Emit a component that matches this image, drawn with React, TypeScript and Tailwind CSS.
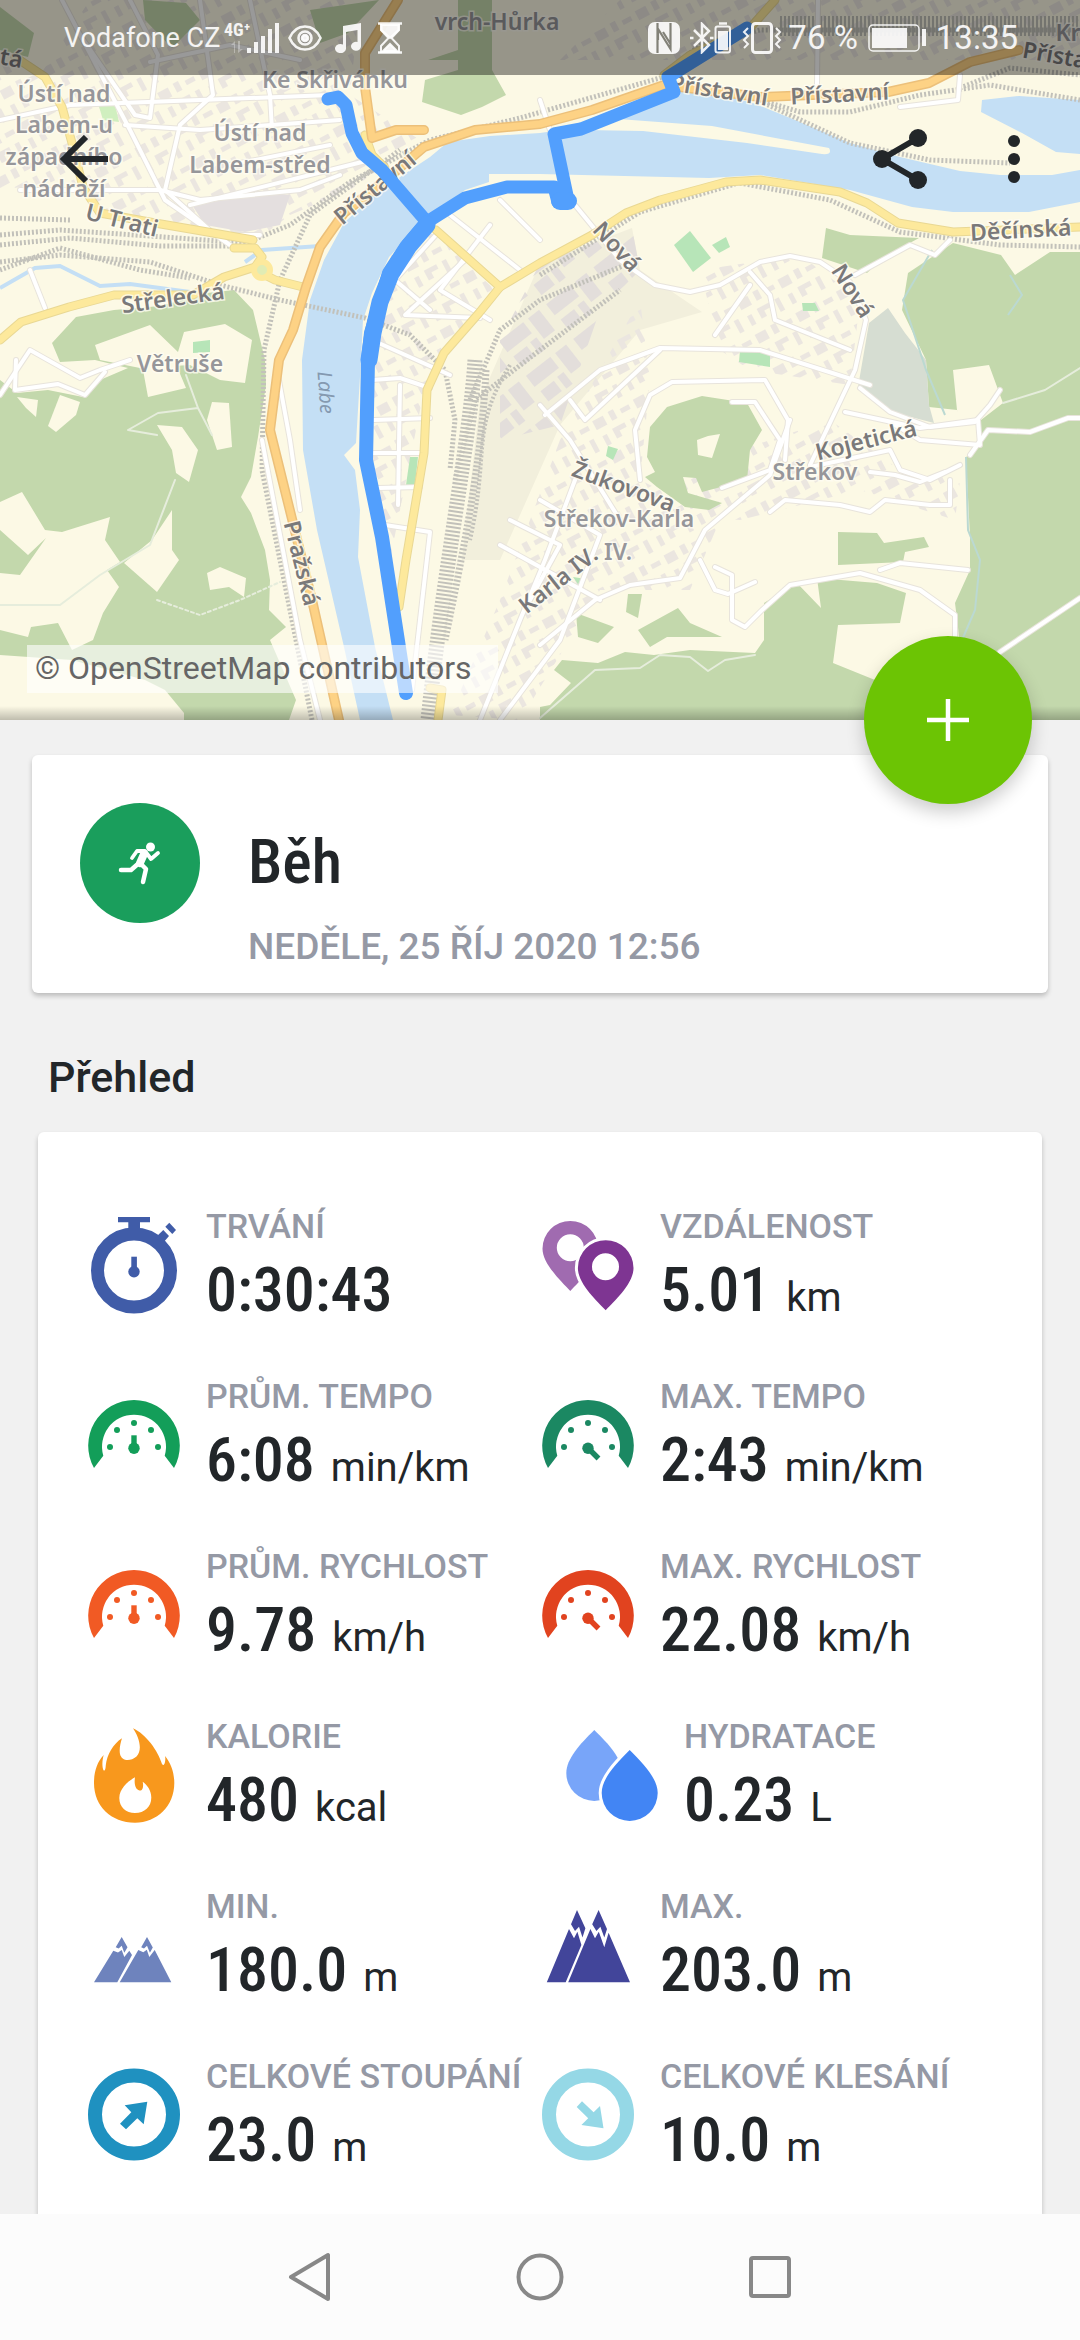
import React from "react";

type StatItem = {
  id: string;
  label: string;
  value: string;
  unit?: string;
  icon: React.ReactNode;
  className?: string;
};

const StatIcon = ({ children }: { children: React.ReactNode }) => (
  <svg viewBox="0 0 92 120" className="h-[120px] w-[92px] shrink-0" aria-hidden="true">
    {children}
  </svg>
);

const StopwatchIcon = () => (
  <StatIcon>
    <g fill="#405ca8">
      <circle cx="46" cy="64.5" r="36.5" fill="none" stroke="#405ca8" strokeWidth="13" />
      <path d="M30 11H62V16.3H52V24H40.3V16.3H30Z" />
      <path d="M75.3 24L81 30L75 37L67 32Z" />
      <path d="M81.3 16.7L88 24L84.3 28L77.3 20.7Z" />
      <path d="M43.3 50.7H48.9V62H43.3Z" />
      <circle cx="46" cy="65.7" r="5.7" />
    </g>
  </StatIcon>
);

const GaugeIcon = ({ color, max = false }: { color: string; max?: boolean }) => (
  <StatIcon>
    <g fill={color}>
      <path d="M6 92A45.8 45.8 0 1 1 86 92L76.7 79.7A32 32 0 1 0 15.3 79.7Z" />
      <circle cx="22" cy="71" r="3" />
      <circle cx="29" cy="54" r="3" />
      <circle cx="46" cy="47" r="3" />
      <circle cx="63" cy="54" r="3" />
      <circle cx="70" cy="71" r="3" />
      <circle cx="46" cy="72.3" r="5.7" />
      <path
        d={max ? "M46 72L56.5 82.5" : "M46 59.3V72"}
        stroke={color}
        strokeWidth="5.4"
      />
    </g>
  </StatIcon>
);

const PinsIcon = () => (
  <StatIcon>
    <path
      fill="#a06bb0"
      fillRule="evenodd"
      d="M28.3 85C20 76 .5 58 .5 42.7A27.8 27.8 0 0 1 56.1 42.7C56.1 58 36.6 76 28.3 85ZM28.3 28.2A13.5 13.5 0 1 0 28.3 55.2A13.5 13.5 0 1 0 28.3 28.2Z"
    />
    <path
      fill="#fff"
      stroke="#fff"
      strokeWidth="6"
      d="M63.7 104.3C55.4 95.3 35.9 78 35.9 62A27.8 27.8 0 0 1 91.5 62C91.5 78 72 95.3 63.7 104.3Z"
    />
    <path
      fill="#7e3592"
      fillRule="evenodd"
      d="M63.7 104.3C55.4 95.3 35.9 78 35.9 62A27.8 27.8 0 0 1 91.5 62C91.5 78 72 95.3 63.7 104.3ZM63.5 47.2A13.5 13.5 0 1 0 63.5 74.2A13.5 13.5 0 1 0 63.5 47.2Z"
    />
  </StatIcon>
);

const FlameIcon = () => (
  <StatIcon>
    <path
      fill="#f8981d"
      fillRule="evenodd"
      d="M45 12.3C58 18 70 35 74 48C75.5 50 76.5 48.5 77 46C77.4 44 77.5 42 77 40C83 47 86.3 57 86.3 67C86.3 90 69 106.7 47 106.7C23 106.7 6 90 6 67C6 56 9 46 15.7 39C14 45 14 51 15.5 54.3C17 55.5 17.6 53 17.8 49C19 39 25 28 34 22.3C32.5 27 31 33 32 38C33.5 45 42 46 48.5 40.5C55 34 51 21 45 12.3ZM47 61.3C40 65 31.3 73 31.3 82C31.3 91 38 97 47 97C56.5 97 63.3 91 63.3 81.5C63.3 74 59 69 54.7 65.7C55.7 70 55 75 51.5 74.6C47 73.5 46 67 47 61.3Z"
    />
  </StatIcon>
);

const DropsIcon = () => (
  <StatIcon>
    <path fill="#78a5f9" d="M28.3 14C14 28 .3 43 .3 57A28 28 0 0 0 56.3 57C56.3 43 42.6 28 28.3 14Z" />
    <path
      fill="#4285f4"
      stroke="#fff"
      strokeWidth="6"
      paintOrder="stroke"
      d="M63.7 34C49.4 48 35.7 63 35.7 77A28 28 0 0 0 91.7 77C91.7 63 78 48 63.7 34Z"
    />
  </StatIcon>
);

const LowPeaksIcon = () => (
  <StatIcon>
    <g fill="#6e83bd">
      <path d="M33.7 51L39.5 61.3L36.3 66.7L33.7 59.7L30.7 62.6L27.7 61.3Z" />
      <path d="M25.3 64.7L30 66.5L33.7 64L36.3 71L41.3 64.7L44 69L29.3 96.3H6Z" />
      <path d="M59 51L64.8 61.5L61.9 66.7L59 59.7L56 62.6L53.2 61.3Z" />
      <path d="M50.3 64L55.3 66.2L58.8 63.8L61.3 71L66.7 64L83.3 96.3H31.7Z" />
    </g>
  </StatIcon>
);

const HighPeaksIcon = () => (
  <StatIcon>
    <g fill="#42459a">
      <path d="M35 24L43.4 42.3L40.5 51.5L37 40.7L33 45L29 38.3Z" />
      <path d="M27 43L32 52.3L35.4 45.7L39.4 59L23.7 96.3H4.8Z" />
      <path d="M56.6 24L65 43L62.3 51.5L58.4 40.7L54.4 45L50.2 38.3Z" />
      <path d="M48.4 43L53 52.3L56.8 45.7L62.3 61.3L66.6 46.7L88 96.3H26.2Z" />
    </g>
  </StatIcon>
);

const AscentIcon = () => (
  <StatIcon>
    <circle cx="46" cy="58.5" r="39" fill="none" stroke="#1f91c0" strokeWidth="14" />
    <path fill="#1f91c0" d="M59.3 45.7L55.7 68.3L49.3 62.3L38 73.3L32 67.7L43.3 56.3L36.7 49.3Z" />
  </StatIcon>
);

const DescentIcon = () => (
  <StatIcon>
    <circle cx="46" cy="58.5" r="39" fill="none" stroke="#95d8e6" strokeWidth="14" />
    <path fill="#95d8e6" d="M61.5 72.3L58 50L51.6 56.3L40 45.3L34.7 51L46.2 62.3L39.4 69Z" />
  </StatIcon>
);

const stats: StatItem[] = [
  { id: "duration", label: "TRVÁNÍ", value: "0:30:43", icon: <StopwatchIcon /> },
  { id: "distance", label: "VZDÁLENOST", value: "5.01", unit: "km", icon: <PinsIcon /> },
  { id: "avg-pace", label: "PRŮM. TEMPO", value: "6:08", unit: "min/km", icon: <GaugeIcon color="#139e59" /> },
  { id: "max-pace", label: "MAX. TEMPO", value: "2:43", unit: "min/km", icon: <GaugeIcon color="#1b8862" max /> },
  { id: "avg-speed", label: "PRŮM. RYCHLOST", value: "9.78", unit: "km/h", icon: <GaugeIcon color="#f15a24" /> },
  { id: "max-speed", label: "MAX. RYCHLOST", value: "22.08", unit: "km/h", icon: <GaugeIcon color="#e1431f" max /> },
  { id: "calories", label: "KALORIE", value: "480", unit: "kcal", icon: <FlameIcon /> },
  { id: "hydration", label: "HYDRATACE", value: "0.23", unit: "L", icon: <DropsIcon />, className: "pl-6" },
  { id: "min-altitude", label: "MIN.", value: "180.0", unit: "m", icon: <LowPeaksIcon /> },
  { id: "max-altitude", label: "MAX.", value: "203.0", unit: "m", icon: <HighPeaksIcon /> },
  { id: "ascent", label: "CELKOVÉ STOUPÁNÍ", value: "23.0", unit: "m", icon: <AscentIcon /> },
  { id: "descent", label: "CELKOVÉ KLESÁNÍ", value: "10.0", unit: "m", icon: <DescentIcon /> },
];

const forests = [
  "M0 380L17 393L48 390L83 397L100 380L128 368L95 360L60 362L52 343L76 317L114 310L160 306L207 293L234 290L253 310L265 360L266 385L258 437L251 477L241 497L251 513L265 550L270 580L269 610L286 627L270 640L296 700L289 720H0Z",
  "M650 427L667 407L702 396L747 403L762 430L750 450L747 480L702 492L696 478L683 477L688 493L722 503L709 510L685 507L657 487L645 477L655 472L647 457Z",
  "M908 273L953 243L1001 255L1015 275L1050 252H1080V720H540V707L550 705L571 683L554 670L562 660L598 663L625 652L654 655L690 650L755 653L764 640V603L785 590L796 582L821 608L817 578L877 583L906 593L900 623L838 625L833 663L875 680L960 650L958 627L955 603L970 570L970 537L966 457L975 440L957 410L929 407L926 360L902 310Z",
  "M838 532L877 533L884 543L924 537L929 547L905 552L903 562L838 565Z",
  "M826 228L850 235L919 238L884 257L867 273L822 258Z",
  "M576 613L614 627L598 643L578 637Z",
  "M678 608L690 623L722 637L667 637L650 647L638 630Z",
  "M628 594L642 594L638 618L626 612Z",
  "M458 0H492V70L506 95L482 107L461 115L422 102L425 80L458 70V60H428L458 50Z",
  "M0 7L34 33L28 57L0 50Z",
  "M143 0L186 3L200 20L172 48L145 20Z",
  "M310 10L379 0L348 33L320 43Z",
];

const clearings = [
  "M0 502L22 492L45 530L62 532L110 517L105 540L120 562L107 570L119 587L103 613L93 640L72 650L58 623L31 627L28 637L0 630Z",
  "M172 510L172 550L179 560L157 592L124 563L152 540Z",
  "M157 425L182 427L198 450L189 482L176 473L172 450Z",
  "M212 402L229 403L232 447L217 450L207 420Z",
  "M138 345L170 350L186 388L148 397L143 370Z",
  "M207 573L220 567L246 578L244 597L229 587L210 590Z",
  "M0 655L72 660L145 680L165 690L184 713V720H0Z",
  "M95 345L150 325L178 352L184 332L225 324L252 340L245 383L220 380L190 365L140 368L100 360Z",
  "M17 397L38 400L36 417L26 408Z",
  "M60 395L80 402L76 415L56 432L48 426Z",
  "M697 440L708 436L720 434L712 458L698 455Z",
  "M953 370L989 365L1003 403L981 420L980 445L966 457L957 410Z",
];

const urban = [
  "M0 60L40 75L90 0H360L350 95L420 140L350 190L290 215L250 245L100 210L70 180L0 190Z",
  "M398 225L436 235L495 290L455 345L425 385L390 560L370 460L372 340Z",
  "M700 270L800 255L860 300L850 385L750 370L720 350Z",
  "M500 600L560 440L640 300L650 380L640 480L720 520L690 590L600 590L520 720L450 715Z",
  "M560 60H1080V0H620Z",
  "M640 510L740 450L830 420L900 470L960 480L955 520L860 490L740 520Z",
];

const whiteRoads = [
  "M62 0L130 130L165 200L230 245",
  "M0 120L70 105L200 100L330 95",
  "M20 190L160 190L200 200L300 190L340 175",
  "M125 125L200 130L340 120",
  "M80 35L135 115L150 118L158 55L130 0",
  "M200 0L213 95L180 125L165 190L215 235L260 235",
  "M250 0L270 95L272 130",
  "M190 205L330 170L370 160",
  "M230 165L330 145",
  "M150 62L230 45L300 60",
  "M30 270L45 308",
  "M0 395L30 350L80 378L100 370L130 360",
  "M16 360L15 390L58 384L85 395L105 372",
  "M372 340L450 375",
  "M372 380L400 378L430 388",
  "M374 420L430 418",
  "M372 453L425 453",
  "M378 488L420 487",
  "M400 385L398 505",
  "M385 525L430 532L412 690",
  "M436 235L395 280L430 310",
  "M465 260L405 315L480 318",
  "M490 225L440 290L490 320",
  "M450 215L520 270M500 200L540 240",
  "M575 205L620 260L655 285L690 292L720 285L760 262L790 256L820 262L850 282L866 320L855 370L810 465",
  "M540 405L570 440L620 520M545 415L600 370L660 348L760 350L870 385",
  "M750 272L770 295L775 320L850 350M750 285L715 335",
  "M570 400L585 420L660 350",
  "M855 275L910 245L935 255L950 240",
  "M640 480L635 430L650 395L672 382L765 380L788 420L785 460",
  "M732 402L755 402L770 425L780 440L770 470L722 488",
  "M860 388L890 412L930 427L975 422L990 405L1000 390",
  "M845 412L920 428L978 420L980 445L920 440L895 425",
  "M810 467L890 450L900 470L930 480L960 465",
  "M870 472L895 475L920 482L945 472M950 480L950 505L930 505L885 500L870 512L840 505L785 500L770 512",
  "M540 645L595 600L630 585L680 578L705 530L770 475L790 420",
  "M700 560L715 590L728 594L755 582M715 567L732 575L732 620L745 627L762 610L790 585L860 573L920 590L955 615L955 640",
  "M880 570L900 563L968 570",
  "M970 455L988 430L1030 432L1068 418H1080",
  "M1000 652L1080 598",
  "M540 500L600 535L560 640L500 720M545 560L520 620L480 720M575 480L545 560",
  "M500 545L600 600M510 520L560 545L530 600",
  "M540 100L560 160L572 205",
  "M818 0L817 85M960 75L958 100L900 107",
  "M278 375L290 440L300 510",
  "M262 440L300 640L320 720",
];

const yellowRoads = [
  "M15 57L45 77L62 107L72 143L83 187L100 213L155 223L196 230L253 240",
  "M0 340L21 322L69 307L114 295L193 295L224 277L255 267L262 257L255 248L234 248",
  "M255 270L275 280L303 287",
  "M365 135L372 155L385 168",
  "M436 230L500 287L540 263L592 235L626 213L660 200L726 182L760 180L840 192L867 203L898 223L953 232L1080 227",
  "M500 287L479 313L444 353L427 390L424 453L406 560L399 607",
  "M430 688L442 690L438 720",
  "M664 75L690 55L750 28L775 0",
];

const orangeRoads = [
  "M398 0L365 53L365 87L372 138L396 130L424 130",
  "M1019 50L970 62L929 83L888 92L760 97L664 85L592 110L540 124L475 130L424 147L389 177L344 213L320 247L306 287L293 330L279 360L270 430L293 523L312 600L339 720",
];

const rails = [
  "M0 218L70 220M0 235L60 230L150 236L245 243L290 225L350 182L430 140L520 118L660 78L700 45L760 30L1080 30",
  "M0 245L70 238L160 246L230 246",
  "M0 262L60 255L150 262L220 285L280 300L365 318L410 335L445 370L455 420L450 470",
  "M0 270L60 248L140 270L190 278",
  "M312 720L280 560L262 470L264 350L280 280L310 215L400 150",
  "M764 103L850 143L930 160L1010 163",
  "M760 100L800 112L850 112L920 95L990 85L1080 100M960 88L1010 68L1080 75",
  "M470 400L500 330L540 300L625 265M455 480L475 400L540 350L620 290",
  "M740 183L830 200L900 232L1000 245L1080 247",
  "M540 275L640 212L735 184",
];

type MapLabel = { text: string; x: number; y: number; rotate?: number; road?: boolean };

const mapLabels: MapLabel[] = [
  { text: "Ústí nad", x: 64, y: 102 },
  { text: "Labem-u", x: 64, y: 133 },
  { text: "západního", x: 64, y: 165 },
  { text: "nádraží", x: 64, y: 197 },
  { text: "Ke Skřivánku", x: 335, y: 88 },
  { text: "Ústí nad", x: 260, y: 141 },
  { text: "Labem-střed", x: 260, y: 173 },
  { text: "vrch-Hůrka", x: 497, y: 30 },
  { text: "Větruše", x: 180, y: 372 },
  { text: "Střekov", x: 815, y: 480 },
  { text: "Střekov-Karla", x: 619, y: 527 },
  { text: "IV.", x: 618, y: 560 },
  { text: "U Trati", x: 120, y: 228, rotate: 14, road: true },
  { text: "Střelecká", x: 174, y: 306, rotate: -8, road: true },
  { text: "Přístavní", x: 380, y: 194, rotate: -40, road: true },
  { text: "Přístavní", x: 718, y: 98, rotate: 9, road: true },
  { text: "Přístavní", x: 840, y: 102, rotate: -3, road: true },
  { text: "Přístavní", x: 1070, y: 66, rotate: 10, road: true },
  { text: "Nová", x: 611, y: 252, rotate: 48, road: true },
  { text: "Nová", x: 846, y: 295, rotate: 58, road: true },
  { text: "Děčínská", x: 1021, y: 238, rotate: -3, road: true },
  { text: "Pražská", x: 294, y: 565, rotate: 76, road: true },
  { text: "Kojetická", x: 868, y: 448, rotate: -14, road: true },
  { text: "Žukovova", x: 621, y: 494, rotate: 20, road: true },
  { text: "Karla IV.", x: 563, y: 586, rotate: -38, road: true },
  { text: "tá", x: 10, y: 66, rotate: 10, road: true },
  { text: "Kr", x: 1068, y: 41 },
];

const RouteMap = () => (
  <svg
    viewBox="0 0 1080 720"
    preserveAspectRatio="xMidYMid slice"
    className="block h-full w-full"
    role="img"
    aria-label="Mapa trasy"
  >
    <defs>
      <pattern id="houses" width="46" height="38" patternUnits="userSpaceOnUse" patternTransform="rotate(-28)">
        <path d="M3 4H15V14H3ZM21 3H27V13H21ZM33 6H43V11H33ZM5 22H10V33H5ZM17 20H31V25H23V31H17ZM37 20H42V34H37Z" fill="#ebe6e0" />
      </pattern>
      <pattern id="halls" width="60" height="44" patternUnits="userSpaceOnUse" patternTransform="rotate(-38)">
        <path d="M3 4H34V18H3ZM40 4H54V30H40ZM5 25H22V38H5ZM27 24H35V39H27Z" fill="#e3dedb" />
      </pattern>
      <linearGradient id="map-edge" x1="0" y1="0" x2="0" y2="1">
        <stop offset="0" stopColor="#000" stopOpacity="0" />
        <stop offset="1" stopColor="#000" stopOpacity="0.24" />
      </linearGradient>
    </defs>
    <rect width="1080" height="720" fill="#fcf9e5" />

    {/* Land use */}
    <path d="M540 263L632 228L640 270L702 312L640 330L560 425L500 560L462 560L480 400Z" fill="#f2efdc" />
    <path d="M540 263L632 228L640 270L600 310L560 425L500 440L500 340Z" fill="url(#halls)" />
    {urban.map((d) => (
      <path key={d} d={d} fill="url(#houses)" />
    ))}
    <path d="M192 205L250 190L290 195L280 225L245 232L205 225Z" fill="#e4dfdf" />
    {forests.map((d) => (
      <path key={d} d={d} fill="#c3d8ac" />
    ))}
    {clearings.map((d) => (
      <path key={d} d={d} fill="#fcf9e5" />
    ))}
    <path d="M0 530L28 555L46 538L20 575L0 573Z" fill="#c3d8ac" />
    <path d="M869 323L888 308L905 333L926 360L929 405L934 423L884 410L858 387Z" fill="#d6ddd2" />
    <g fill="#b7e5b8">
      <path d="M674 245L690 231L711 258L693 272Z" />
      <path d="M712 245L726 237L730 247L719 253Z" />
      <path d="M410 457H418L415 485H406Z" />
      <path d="M98 103L114 100L119 122L103 120Z" fill="#d0efbf" />
      <path d="M802 303H815L819 311H803Z" />
      <path d="M740 350L770 352V367L739 362Z" />
      <path d="M608 446L618 449L613 460L606 456Z" />
      <path d="M193 342L210 340V352L193 353Z" />
      <path d="M573 577L586 579L580 587Z" />
    </g>

    {/* Water */}
    <g fill="#c4dff5">
      <path d="M1080 170L1052 175H1000L960 171L900 157L850 143L800 122L756 104L720 94L680 90L640 108L600 124L540 133L490 136L448 142L430 157L406 173L370 198L344 223L324 260L310 300L302 360L303 450L317 530L344 647L360 720H393L375 647L358 557L360 510L355 470L344 455L356 443L361 360L363 320L372 293L389 257L424 220L465 190L489 182V174H540L709 178L760 175L850 190L912 207L953 212H1029L1080 202Z" />
      <path d="M982 100L1019 96L1080 100V154L1056 152L1022 133L981 112Z" />
    </g>
    <path d="M605 118L712 126L829 148Q833 155 822 154L747 143L643 131L585 130Z" fill="#fcf9e5" />
    <g fill="none" stroke="#c4dff5" strokeWidth="4">
      <path d="M0 288L35 268L60 266L100 286L130 284L190 292" />
      <path d="M245 262L262 250L320 246" />
    </g>
    <path d="M1010 275L1022 295L1008 315M966 457L968 530L980 560L975 610L962 640M932 250L903 300L926 370L945 415" fill="none" stroke="#bbd9d2" strokeWidth="2" />

    {/* Railways */}
    <g fill="none" stroke="#c2c1ba" strokeWidth="5" strokeDasharray="2 2">
      {rails.map((d) => (
        <path key={d} d={d} />
      ))}
      <path d="M475 360C470 440 445 560 428 720" strokeWidth="15" />
      <path d="M486 370C482 450 470 520 445 640" strokeWidth="7" />
      <path d="M510 365C470 430 490 450 470 540" strokeWidth="4" />
      <path d="M780 26H1080" strokeWidth="20" />
    </g>

    {/* Roads */}
    <g fill="none" strokeLinecap="round" strokeLinejoin="round">
      <g stroke="#e8e4dc" strokeWidth="6">
        {whiteRoads.map((d) => (
          <path key={d} d={d} />
        ))}
      </g>
      <g stroke="#ffffff" strokeWidth="4">
        {whiteRoads.map((d) => (
          <path key={d} d={d} />
        ))}
      </g>
      <g stroke="#e9d894" strokeWidth="9">
        {yellowRoads.map((d) => (
          <path key={d} d={d} />
        ))}
      </g>
      <g stroke="#fde99c" strokeWidth="7">
        {yellowRoads.map((d) => (
          <path key={d} d={d} />
        ))}
      </g>
      <g stroke="#ecc07a" strokeWidth="10">
        {orangeRoads.map((d) => (
          <path key={d} d={d} />
        ))}
      </g>
      <g stroke="#fdd285" strokeWidth="7">
        {orangeRoads.map((d) => (
          <path key={d} d={d} />
        ))}
      </g>
      <circle cx="262" cy="270" r="8" fill="#e1ecb4" stroke="#fde99c" strokeWidth="6" />
      <g stroke="#e6eddc" strokeWidth="2">
        <path d="M186 375L198 408L158 413L128 430L157 435M198 408L212 435M175 480L150 545L100 575L60 605H0" />
        <path d="M540 718L595 670L640 668L660 655L690 657L708 671L725 660L755 655" />
        <path d="M1003 403L1045 390L1080 368" />
        <path d="M157 600L200 615L240 600L280 582" strokeDasharray="3 3" />
      </g>
    </g>

    {/* Labels */}
    <g
      fontFamily="'Noto Sans', 'Open Sans', sans-serif"
      fontWeight="600"
      fontSize="23"
      textAnchor="middle"
      stroke="#fffdf4"
      strokeOpacity="0.75"
      strokeWidth="3"
      paintOrder="stroke"
    >
      {mapLabels.map((label, index) => (
        <text
          key={index}
          x={label.x}
          y={label.y}
          fill={label.road ? "#7a797a" : "#96969a"}
          transform={`rotate(${label.rotate ?? 0} ${label.x} ${label.y})`}
        >
          {label.text}
        </text>
      ))}
    </g>
    <text
      x="319"
      y="393"
      fontSize="20"
      fontStyle="italic"
      fontFamily="'Noto Sans', 'Open Sans', sans-serif"
      fill="#8499b0"
      textAnchor="middle"
      transform="rotate(86 319 393)"
    >
      Labe
    </text>

    {/* Recorded route */}
    <g fill="none" stroke="#529ffd" strokeWidth="13" strokeLinecap="round" strokeLinejoin="round">
      <path d="M328 99L338 97L346 105L352 133L362 153L382 170L427 222L465 198L507 187L554 187L558 202L568 200L554 134L581 129L674 92L668 77L747 28" />
      <path d="M427 222L406 247L389 273L379 307L371 333L368 360L366 460L382 537L406 693" strokeWidth="14" />
      <path d="M427 225L409 246L391 274L380 302L373 333L369 360" strokeWidth="17" />
      <path d="M560 201L568 201" strokeWidth="18" />
    </g>
    <rect y="706" width="1080" height="14" fill="url(#map-edge)" />
  </svg>
);

const StatusBar = () => (
  <div className="absolute inset-x-0 top-0 flex h-[75px] items-center justify-between bg-black/40 pr-[62px] pl-16 text-white/90">
    <div className="flex items-center">
      <span className="text-[27px] leading-8">Vodafone CZ</span>
      <svg viewBox="0 0 56 36" className="ml-1 h-9 w-14" fill="currentColor" role="img" aria-label="Signál 4G+">
        <text x="0" y="16" fontSize="18" fontWeight="700" fontFamily="'Roboto Condensed', Roboto, sans-serif">4G⁺</text>
        <path d="M23 28h4v5h-4zM30 22h4v11h-4zM37 16h4v17h-4zM44 9h4v24h-4zM51 3h4v30h-4z" />
        <path d="M10 33V25H7L11 21V33ZM14 21H16V29H19L14 33Z" opacity="0.35" />
      </svg>
      <svg viewBox="0 0 34 28" className="ml-2 h-7 w-[34px]" fill="none" stroke="currentColor" strokeWidth="2.6" aria-hidden="true">
        <path d="M1.5 14C5 6 10.500 2.500 17 2.500S29 6 32.500 14C29 22 23.500 25.500 17 25.500S5 22 1.500 14Z" />
        <circle cx="17" cy="14" r="6.500" />
        <circle cx="17" cy="14" r="3" fill="currentColor" />
      </svg>
      <svg viewBox="0 0 28 32" className="ml-3 h-8 w-7" fill="currentColor" aria-hidden="true">
        <path d="M9 4L27 1V24A5 4.500 0 1 1 23.500 20V8L12 10V27A5.500 4.500 0 1 1 9 22.500Z" />
      </svg>
      <svg viewBox="0 0 24 32" className="ml-4 h-8 w-6" fill="none" stroke="currentColor" strokeWidth="2" aria-hidden="true">
        <path d="M0 1.500H24M0 30.500H24" strokeWidth="2.500" />
        <path d="M3 2V8L10.500 16L3 24V30H21V24L13.500 16L21 8V2" />
        <path d="M3.500 3H20.500V8L12 16L3.500 8ZM5 29L12 22L19 29Z" fill="currentColor" />
      </svg>
    </div>
    <div className="flex items-center">
      <svg viewBox="0 0 32 32" className="size-8" aria-hidden="true">
        <rect width="32" height="32" rx="7" fill="currentColor" />
        <path d="M9.500 1V31M9.500 6L22.500 27V14M10 18V9M22.500 1V22L15 10" fill="none" stroke="#828178" strokeWidth="2.200" />
      </svg>
      <svg viewBox="0 0 42 32" className="ml-[10px] h-8 w-[42px]" fill="none" stroke="currentColor" strokeWidth="2.500" aria-hidden="true">
        <path d="M4 8L19 23L12 30V2L19 9L4 24" />
        <path d="M0 16H3.500M20 16H23.500" />
        <rect x="25.500" y="4.500" width="14.500" height="26" rx="2" strokeWidth="2" />
        <path d="M29 1.500H37" />
        <path d="M28 9H38V28H28Z" fill="currentColor" stroke="none" />
      </svg>
      <svg viewBox="0 0 40 32" className="ml-[10px] h-8 w-10" fill="none" stroke="currentColor" strokeWidth="3" aria-hidden="true">
        <rect x="10.500" y="1.500" width="19" height="29" rx="3" />
        <path d="M6 6L2 10L6 14L2 18L6 22L2 26M34 6L38 10L34 14L38 18L34 22L38 26" strokeWidth="2" />
      </svg>
      <span className="ml-[6px] text-[33px] leading-9">76 %</span>
      <svg viewBox="0 0 58 28" className="ml-[10px] h-7 w-[58px]" fill="none" stroke="currentColor" strokeWidth="1.500" aria-hidden="true">
        <rect x="1" y="1" width="50" height="26" rx="4" />
        <path d="M4 4H39V24H4ZM54 5H58V22H54Z" fill="currentColor" stroke="none" />
      </svg>
      <span className="ml-[10px] text-[33px] leading-9">13:35</span>
    </div>
  </div>
);

const Toolbar = () => (
  <div className="absolute inset-x-0 top-[75px] flex h-[168px] items-center text-[#222629]">
    <button type="button" aria-label="Zpět" className="ml-[60px]">
      <svg viewBox="0 0 48 48" className="size-12" fill="none" stroke="currentColor" strokeWidth="6">
        <path d="M48 24H6M26 2L4 24L26 46" />
      </svg>
    </button>
    <button type="button" aria-label="Sdílet" className="ml-auto">
      <svg viewBox="0 0 56 64" className="h-16 w-14" fill="currentColor">
        <path d="M46 11L10 32L46 53" fill="none" stroke="currentColor" strokeWidth="6" />
        <circle cx="10" cy="32" r="9" />
        <circle cx="46" cy="11" r="9" />
        <circle cx="46" cy="53" r="9" />
      </svg>
    </button>
    <button type="button" aria-label="Další možnosti" className="mr-[54px] ml-[74px]">
      <svg viewBox="0 0 24 56" className="h-14 w-6" fill="currentColor">
        <circle cx="12" cy="10" r="6" />
        <circle cx="12" cy="28" r="6" />
        <circle cx="12" cy="46" r="6" />
      </svg>
    </button>
  </div>
);

const StatCell = ({ item }: { item: StatItem }) => (
  <div className={`flex items-center gap-[26px] ${item.className ?? ""}`}>
    {item.icon}
    <div>
      <dt className="text-[34px] leading-10 font-medium whitespace-nowrap text-[#9599a5]">{item.label}</dt>
      <dd className="mt-2 flex items-baseline gap-4 whitespace-nowrap">
        <span className="font-['Roboto_Condensed','Liberation_Sans_Narrow',Roboto,sans-serif] text-[62px] leading-[72px] font-medium">
          {item.value}
        </span>
        {item.unit && <span className="text-[40px] leading-10">{item.unit}</span>}
      </dd>
    </div>
  </div>
);

const NavigationBar = () => (
  <nav className="flex h-[126px] items-center justify-center bg-[#fcfcfc] text-[#888888]">
    <button type="button" aria-label="Zpět" className="flex w-[230px] justify-center">
      <svg viewBox="0 0 48 52" className="h-[52px] w-12" fill="none" stroke="currentColor" strokeWidth="4" strokeLinejoin="round">
        <path d="M42 4V48L5 26Z" />
      </svg>
    </button>
    <button type="button" aria-label="Domů" className="flex w-[230px] justify-center">
      <svg viewBox="0 0 48 48" className="size-12" fill="none" stroke="currentColor" strokeWidth="4">
        <circle cx="24" cy="24" r="21.500" />
      </svg>
    </button>
    <button type="button" aria-label="Nedávné" className="flex w-[230px] justify-center">
      <svg viewBox="0 0 48 48" className="size-12" fill="none" stroke="currentColor" strokeWidth="4">
        <rect x="5" y="5" width="38" height="38" rx="2" />
      </svg>
    </button>
  </nav>
);

const App = () => {
  return (
    <div className="flex min-h-screen flex-col bg-[#f1f1f1] font-[Roboto,'Noto_Sans',sans-serif] text-[#222629]">
      {/* Map header */}
      <header className="relative h-[720px]">
        <RouteMap />
        <StatusBar />
        <Toolbar />
        <a
          href="#openstreetmap"
          className="absolute bottom-[27px] left-[27px] bg-white/60 pt-[3px] pr-[26px] pb-[5px] pl-2 text-[32px] leading-10 text-[#666666]"
        >
          © OpenStreetMap contributors
        </a>
        <button
          type="button"
          aria-label="Přidat"
          className="absolute right-12 -bottom-[84px] z-10 flex size-[168px] items-center justify-center rounded-full bg-[#6cc404] shadow-[0_8px_18px_rgba(0,0,0,0.2)]"
        >
          <svg viewBox="0 0 42 42" className="size-[42px]" stroke="#ffffff" strokeWidth="4.500">
            <path d="M21 0V42M0 21H42" />
          </svg>
        </button>
      </header>

      <main className="flex flex-1 flex-col">
        {/* Activity */}
        <section className="mx-8 mt-[35px] flex items-start gap-12 rounded-md bg-white px-12 pt-12 pb-6 shadow-[0_3px_5px_rgba(0,0,0,0.22)]">
          <div className="flex size-[120px] shrink-0 items-center justify-center rounded-full bg-[#1a9e5c]">
            <svg viewBox="0 0 46 43" className="h-[43px] w-[46px]" fill="none" stroke="#ffffff" strokeWidth="4.500" strokeLinecap="round" strokeLinejoin="round" aria-hidden="true">
              <circle cx="33.500" cy="5" r="4.500" fill="#ffffff" stroke="none" />
              <path d="M27 12L23 21" strokeWidth="8" />
              <path d="M15 16L20 9H28L34 17L41 11" strokeWidth="3.800" />
              <path d="M22 21L14 28H4M23 21L29 27L26 40" />
            </svg>
          </div>
          <div className="pt-[23px]">
            <h1 className="font-['Roboto_Condensed','Liberation_Sans_Narrow',Roboto,sans-serif] text-[62px] leading-[72px] font-medium">
              Běh
            </h1>
            <p className="mt-[27px] text-[37px] leading-11 font-medium text-[#9599a5]">NEDĚLE, 25 ŘÍJ 2020 12:56</p>
          </div>
        </section>

        {/* Overview */}
        <h2 className="mx-12 mt-[60px] text-[43px] leading-12 font-medium">Přehled</h2>
        <section className="mx-[38px] mt-[31px] flex-1 rounded-t-md bg-white pt-[74px] pr-[46px] pb-[38px] pl-[50px] shadow-[0_3px_5px_rgba(0,0,0,0.22)]">
          <dl className="grid grid-cols-2 gap-y-[50px]">
            {stats.map((item) => (
              <StatCell key={item.id} item={item} />
            ))}
          </dl>
        </section>
      </main>

      <NavigationBar />
    </div>
  );
};

export default App;
